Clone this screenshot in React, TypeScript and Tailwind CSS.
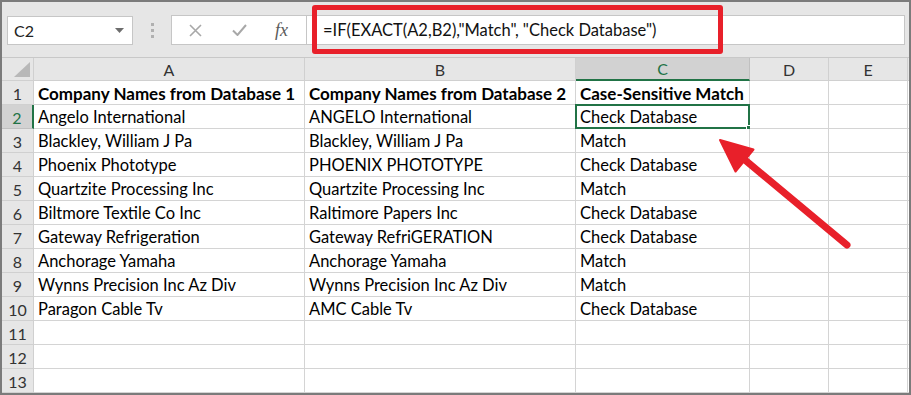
import React from 'react';

const rows: string[][] = [
  ['Company Names from Database 1', 'Company Names from Database 2', 'Case-Sensitive Match'],
  ['Angelo International', 'ANGELO International', 'Check Database'],
  ['Blackley, William J Pa', 'Blackley, William J Pa', 'Match'],
  ['Phoenix Phototype', 'PHOENIX PHOTOTYPE', 'Check Database'],
  ['Quartzite Processing Inc', 'Quartzite Processing Inc', 'Match'],
  ['Biltmore Textile Co Inc', 'Raltimore Papers Inc', 'Check Database'],
  ['Gateway Refrigeration', 'Gateway RefriGERATION', 'Check Database'],
  ['Anchorage Yamaha', 'Anchorage Yamaha', 'Match'],
  ['Wynns Precision Inc Az Div', 'Wynns Precision Inc Az Div', 'Match'],
  ['Paragon Cable Tv', 'AMC Cable Tv', 'Check Database'],
  ['', '', ''],
  ['', '', ''],
  ['', '', ''],
];

const cols = ['A', 'B', 'C', 'D', 'E'];

const App = () => {
  return (
    <div className="relative w-[911px] h-[395px] overflow-hidden border-2 border-[#7b7b7b] bg-[#e6e6e6] font-['Lato',sans-serif] text-black">
      {/* formula bar */}
      <div className="flex items-center h-[55px] pl-[5px] pr-[4px] pt-[1px]">
        <div className="flex items-center justify-between w-[126px] h-[29px] bg-white border border-[#c6c6c6] pl-[6px] pr-[8px] pt-[1px] text-[16px] text-[#222]">
          <span>C2</span>
          <svg width="9" height="5" viewBox="0 0 9 5"><path d="M0 0h9L4.5 5z" fill="#6d6d6d" /></svg>
        </div>
        <div className="flex flex-col gap-[3px] w-[38px] items-center">
          <span className="w-[3px] h-[3px] bg-[#b0b0b0]" />
          <span className="w-[3px] h-[3px] bg-[#b0b0b0]" />
          <span className="w-[3px] h-[3px] bg-[#b0b0b0]" />
        </div>
        <div className="flex items-center w-[136px] h-[30px] bg-white border border-[#c6c6c6]">
          <svg className="ml-[17px]" width="13" height="13" viewBox="0 0 13 13">
            <path d="M1 1l11 11M12 1L1 12" stroke="#a8a8a8" strokeWidth="1.6" />
          </svg>
          <svg className="ml-[30px]" width="15" height="12" viewBox="0 0 15 12">
            <path d="M1 6.5l4.5 4.5L14 1" stroke="#a8a8a8" strokeWidth="2" fill="none" />
          </svg>
          <span className="ml-[28px] font-['Liberation_Serif',serif] italic text-[18px] text-[#5a5a5a]">fx</span>
        </div>
        <div className="flex-1 h-[30px] bg-white border border-[#c6c6c6] border-l-0 flex items-center pl-[16px] pt-[1px] text-[16.5px] text-[#111]">
          =IF(EXACT(A2,B2),"Match", "Check Database")
        </div>
      </div>

      {/* sheet */}
      <div className="grid grid-cols-[32px_271px_271px_174px_79px_79px_1fr] border-t border-[#c8c8c8]">
        <div className="h-[23px] flex items-end justify-end pr-[3px] pb-[3px] border-r border-b border-[#d0d0d0]">
          <svg width="16" height="15" viewBox="0 0 16 15"><path d="M16 0V15H0z" fill="#b8b8b8" /></svg>
        </div>
        {cols.map((c) => (
          <div
            key={c}
            className={
              c === 'C'
                ? 'h-[23px] flex items-center justify-center pt-[1px] bg-[#d2d2d2] text-[#217346] text-[16px] border-r border-[#c0c0c0] border-b-2 border-b-[#217346]'
                : 'h-[23px] flex items-center justify-center pt-[1px] text-[16px] text-[#333] border-r border-b border-[#d0d0d0]'
            }
          >
            {c}
          </div>
        ))}
        <div className="h-[23px] border-b border-[#d0d0d0]" />

        {rows.map((r, i) => (
          <React.Fragment key={i}>
            <div
              className={
                i === 1
                  ? 'h-[24px] flex items-center justify-center pt-[2px] bg-[#d2d2d2] text-[#217346] text-[16px] border-b border-[#c0c0c0] border-r-2 border-r-[#217346]'
                  : 'h-[24px] flex items-center justify-center pt-[2px] text-[16px] text-[#333] border-r border-b border-[#d0d0d0]'
              }
            >
              {i + 1}
            </div>
            {[0, 1, 2, 3, 4, 5].map((j) => (
              <div
                key={j}
                className={`relative h-[24px] bg-white flex items-center pl-[4px] pt-[2px] whitespace-nowrap border-b border-[#d4d4d4] ${j < 5 ? 'border-r' : ''} ${i === 0 ? 'font-bold text-[17px]' : 'text-[16.5px]'}`}
              >
                {j < 3 ? r[j] : ''}
                {i === 1 && j === 2 && (
                  <div className="absolute -left-[1px] -top-[1px] -right-[1px] -bottom-[1px] border-2 border-[#217346]">
                    <div className="absolute -right-[4px] -bottom-[4px] w-[6px] h-[6px] bg-[#217346] border border-white" />
                  </div>
                )}
              </div>
            ))}
          </React.Fragment>
        ))}
      </div>

      {/* annotations */}
      <div className="absolute left-[310px] top-[3px] w-[411px] h-[49px] border-[5px] border-[#e8202a] rounded-[3px]" />
      <svg className="absolute -left-[2px] -top-[2px] pointer-events-none" width="911" height="395" viewBox="0 0 911 395">
        <path d="M745 160L847 245" stroke="#e8202a" strokeWidth="7" strokeLinecap="round" />
        <path d="M720 140L735.5 171.5L753.5 149.5z" fill="#e8202a" stroke="#e8202a" strokeWidth="2" strokeLinejoin="round" />
      </svg>
    </div>
  );
};

export default App;
